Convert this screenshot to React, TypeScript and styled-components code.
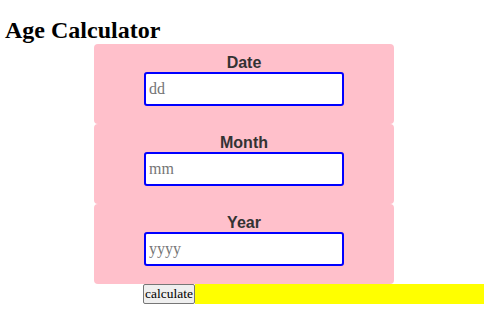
import React, { useState } from "react";
import styled, { createGlobalStyle } from "styled-components";

const Global = createGlobalStyle`
  html, body { margin: 0; padding: 0; background: #ffffff; }
  body { font-family: "Liberation Serif", "Times New Roman", serif; }
`;

const Page = styled.div`
  display: flex;
  flex-direction: column;
  padding: 17px 0 0 0;
`;

const Title = styled.h2`
  margin: 0 0 0 5px;
  font-family: "Liberation Serif", "Times New Roman", serif;
  font-size: 24px;
  font-weight: bold;
  line-height: 27px;
  color: #000;
`;

const Form = styled.div`
  display: flex;
  flex-direction: column;
  width: 300px;
  margin-left: 94px;
`;

const Field = styled.div`
  box-sizing: border-box;
  height: 80px;
  background: #ffc0cb;
  border-radius: 4px;
  display: flex;
  flex-direction: column;
  align-items: center;
  padding-top: 9px;
`;

const Label = styled.label`
  font-family: "Liberation Sans", Arial, sans-serif;
  font-weight: bold;
  font-size: 16px;
  line-height: 19px;
  color: #333333;
`;

const Input = styled.input`
  box-sizing: border-box;
  width: 200px;
  height: 34px;
  border: 2px solid #0000ff;
  border-radius: 3px;
  padding: 0 3px;
  background: #ffffff;
  font-family: "Liberation Serif", "Times New Roman", serif;
  font-size: 16px;
  outline: none;
  &::placeholder { color: #757575; }
`;

const Row = styled.div`
  display: flex;
  align-items: flex-start;
  margin-left: 143px;
`;

const Button = styled.button`
  box-sizing: border-box;
  height: 20px;
  padding: 0 1px;
  border: 1px solid #767676;
  border-radius: 2px;
  background: #efefef;
  font-family: "Liberation Serif", "Times New Roman", serif;
  font-size: 13.5px;
  line-height: 16px;
  color: #000;
`;

const Result = styled.div`
  width: 289px;
  height: 20px;
  background: #ffff00;
`;

const fields = [
  { label: "Date", ph: "dd" },
  { label: "Month", ph: "mm" },
  { label: "Year", ph: "yyyy" },
];

export default function App() {
  const [vals, setVals] = useState<string[]>(["", "", ""]);
  return (
    <Page>
      <Global />
      <Title>Age Calculator</Title>
      <Form>
        {fields.map((f, i) => (
          <Field key={f.label}>
            <Label>{f.label}</Label>
            <Input
              placeholder={f.ph}
              value={vals[i]}
              onChange={(e) => {
                const n = [...vals];
                n[i] = e.target.value;
                setVals(n);
              }}
            />
          </Field>
        ))}
      </Form>
      <Row>
        <Button>calculate</Button>
        <Result />
      </Row>
    </Page>
  );
}
